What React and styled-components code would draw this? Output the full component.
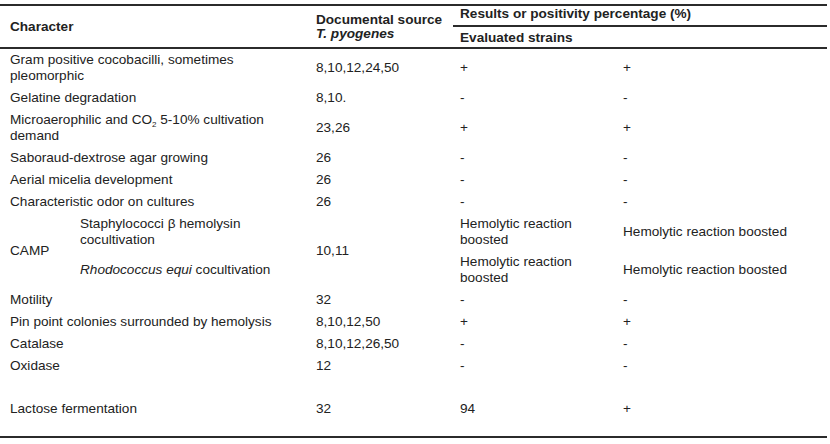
import React from "react";
import styled, { createGlobalStyle } from "styled-components";

const GlobalStyle = createGlobalStyle`
  body {
    margin: 0;
    background: #fff;
    font-family: "Liberation Sans", Arial, sans-serif;
    color: #222;
  }
`;

const rule = "2px solid #2b2b2b";

const Table = styled.table`
  width: 827px;
  margin-top: 4px;
  table-layout: fixed;
  border-collapse: separate;
  border-spacing: 0;
  border-top: ${rule};
  border-bottom: ${rule};
  font-size: 13.6px;
`;

const Col = styled.col`
  width: ${(p) => p.$w}px;
`;

const HeadCell = styled.th`
  font-weight: bold;
  text-align: left;
  vertical-align: middle;
  line-height: 14px;
  padding: ${(p) => p.$pad || "0 7px"};
  padding-left: ${(p) => (p.$first ? "10px" : "7px")};
  border-bottom: ${(p) => (p.$ruled ? rule : "none")};
  white-space: nowrap;

  em {
    font-style: italic;
  }
`;

const Cell = styled.td`
  vertical-align: middle;
  line-height: 16px;
  padding: 3px 7px;
  padding-left: ${(p) => (p.$first ? "10px" : "7px")};
  height: 16px;
`;

const Spacer = styled.td`
  height: ${(p) => p.$h}px;
  padding: 0;
`;

const Sub = styled.sub`
  font-size: 8px;
  line-height: 0;
  vertical-align: -3px;
`;

const rows = [
  {
    label: "Gram positive cocobacilli, sometimes pleomorphic",
    source: "8,10,12,24,50",
    strains: "+",
    pct: "+",
  },
  { label: "Gelatine degradation", source: "8,10.", strains: "-", pct: "-" },
  {
    label: (
      <>
        Microaerophilic and CO<Sub>2</Sub> 5-10% cultivation demand
      </>
    ),
    source: "23,26",
    strains: "+",
    pct: "+",
  },
  { label: "Saboraud-dextrose agar growing", source: "26", strains: "-", pct: "-" },
  { label: "Aerial micelia development", source: "26", strains: "-", pct: "-" },
  { label: "Characteristic odor on cultures", source: "26", strains: "-", pct: "-" },
];

const rowsAfter = [
  { label: "Motility", source: "32", strains: "-", pct: "-" },
  {
    label: "Pin point colonies surrounded by hemolysis",
    source: "8,10,12,50",
    strains: "+",
    pct: "+",
  },
  { label: "Catalase", source: "8,10,12,26,50", strains: "-", pct: "-" },
  { label: "Oxidase", source: "12", strains: "-", pct: "-" },
];

const Row = ({ r }) => (
  <tr>
    <Cell $first colSpan={2}>
      {r.label}
    </Cell>
    <Cell>{r.source}</Cell>
    <Cell>{r.strains}</Cell>
    <Cell>{r.pct}</Cell>
  </tr>
);

export default function App() {
  return (
    <>
      <GlobalStyle />
      <Table>
        <colgroup>
          <Col $w={73} />
          <Col $w={236} />
          <Col $w={144} />
          <Col $w={163} />
          <Col $w={211} />
        </colgroup>
        <thead>
          <tr>
            <HeadCell $first colSpan={2} rowSpan={2} $ruled>
              Character
            </HeadCell>
            <HeadCell rowSpan={2} $ruled>
              Documental source
              <br />
              <em>T. pyogenes</em>
            </HeadCell>
            <HeadCell colSpan={2} $ruled $pad="1px 7px 4px">
              Results or positivity percentage (%)
            </HeadCell>
          </tr>
          <tr>
            <HeadCell colSpan={2} $ruled $pad="4px 7px 2px">
              Evaluated strains
            </HeadCell>
          </tr>
        </thead>
        <tbody>
          {rows.map((r, i) => (
            <Row key={i} r={r} />
          ))}
          <tr>
            <Cell $first rowSpan={2}>
              CAMP
            </Cell>
            <Cell>Staphylococci β hemolysin cocultivation</Cell>
            <Cell rowSpan={2}>10,11</Cell>
            <Cell>Hemolytic reaction boosted</Cell>
            <Cell>Hemolytic reaction boosted</Cell>
          </tr>
          <tr>
            <Cell>
              <em>Rhodococcus equi</em> cocultivation
            </Cell>
            <Cell>Hemolytic reaction boosted</Cell>
            <Cell>Hemolytic reaction boosted</Cell>
          </tr>
          {rowsAfter.map((r, i) => (
            <Row key={i} r={r} />
          ))}
          <tr>
            <Spacer colSpan={5} $h={21} />
          </tr>
          <Row r={{ label: "Lactose fermentation", source: "32", strains: "94", pct: "+" }} />
          <tr>
            <Spacer colSpan={5} $h={16} />
          </tr>
        </tbody>
      </Table>
    </>
  );
}
